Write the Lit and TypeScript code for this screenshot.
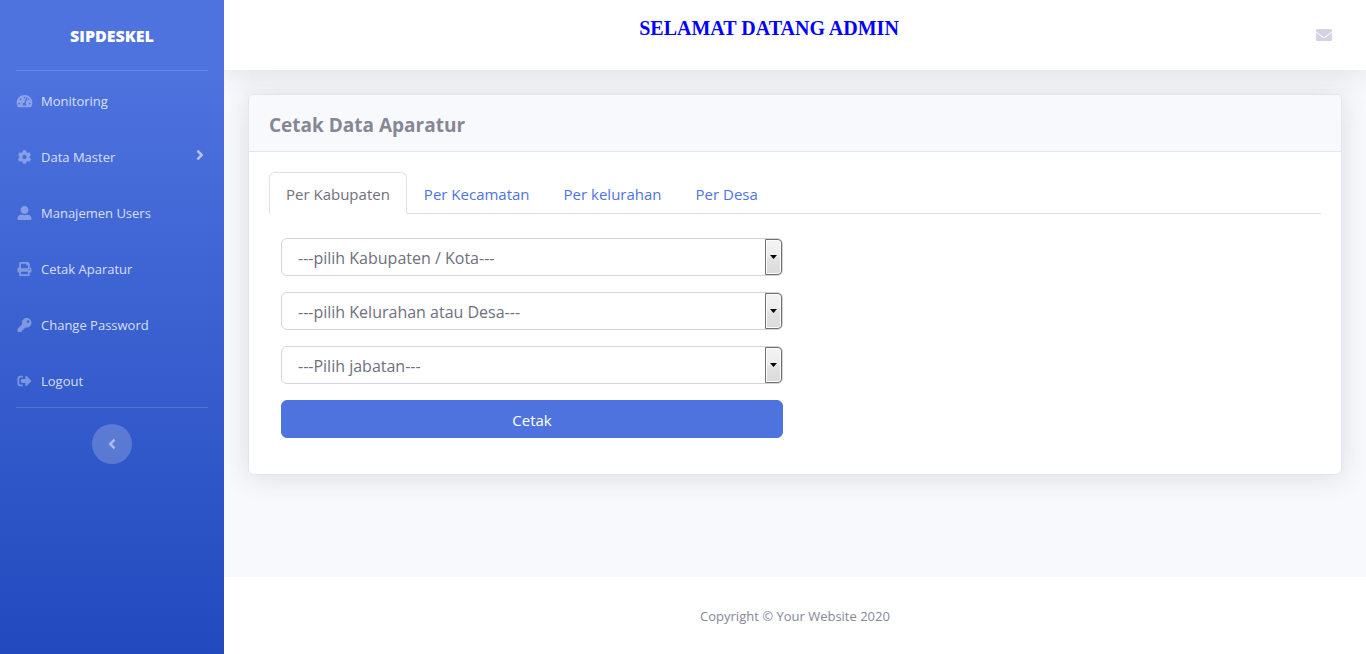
import { LitElement, html, css, svg } from "lit";
import { customElement, state } from "lit/decorators.js";
import { classMap } from "lit/directives/class-map.js";

interface Icon {
  box: string;
  path: string;
}

const icons: Record<string, Icon> = {
  gauge: {
    box: "0 0 576 512",
    path: "M288 32C128.94 32 0 160.94 0 320c0 52.8 14.25 102.26 39.06 144.8 5.61 9.62 16.3 15.2 27.44 15.2h443c11.14 0 21.83-5.58 27.44-15.2C561.75 422.26 576 372.8 576 320c0-159.06-128.94-288-288-288zm0 64c14.71 0 26.58 10.13 30.32 23.65-1.11 2.26-2.64 4.23-3.45 6.67l-9.22 27.67c-5.13 3.49-10.97 6.01-17.64 6.01-17.67 0-32-14.33-32-32S270.33 96 288 96zM96 384c-17.67 0-32-14.33-32-32s14.33-32 32-32 32 14.33 32 32-14.33 32-32 32zm48-160c-17.67 0-32-14.33-32-32s14.33-32 32-32 32 14.33 32 32-14.33 32-32 32zm246.77-72.41l-61.33 184C343.13 347.33 352 364.54 352 384c0 11.72-3.38 22.55-8.88 32H232.88c-5.5-9.45-8.88-20.28-8.88-32 0-33.94 26.5-61.43 59.9-63.59l61.34-184.01c4.17-12.56 17.73-19.45 30.36-15.17 12.57 4.19 19.35 17.79 15.17 30.36zm14.66 57.2l15.52-46.55c3.47-1.29 7.13-2.23 11.05-2.23 17.67 0 32 14.33 32 32s-14.33 32-32 32c-11.38-.01-20.89-6.28-26.57-15.22zM480 384c-17.67 0-32-14.33-32-32s14.33-32 32-32 32 14.33 32 32-14.33 32-32 32z",
  },
  cog: {
    box: "0 0 512 512",
    path: "M487.4 315.7l-42.6-24.6c4.3-23.2 4.3-47 0-70.2l42.6-24.6c4.9-2.8 7.1-8.6 5.5-14-11.1-35.6-30-67.8-54.7-94.6-3.8-4.1-10-5.1-14.8-2.3L380.8 110c-17.9-15.4-38.5-27.3-60.8-35.1V25.8c0-5.6-3.9-10.5-9.4-11.7-36.7-8.2-74.3-7.8-109.2 0-5.5 1.2-9.4 6.1-9.4 11.7V75c-22.2 7.9-42.8 19.8-60.8 35.1L88.7 85.5c-4.9-2.8-11-1.9-14.8 2.3-24.7 26.7-43.6 58.9-54.7 94.6-1.7 5.4.6 11.2 5.5 14L67.3 221c-4.3 23.2-4.3 47 0 70.2l-42.6 24.6c-4.9 2.8-7.1 8.6-5.5 14 11.1 35.6 30 67.8 54.7 94.6 3.8 4.1 10 5.1 14.8 2.3l42.6-24.6c17.9 15.4 38.5 27.3 60.8 35.1v49.2c0 5.6 3.9 10.5 9.4 11.7 36.7 8.2 74.3 7.8 109.2 0 5.5-1.2 9.4-6.1 9.4-11.7v-49.2c22.2-7.9 42.8-19.8 60.8-35.1l42.6 24.6c4.9 2.8 11 1.9 14.8-2.3 24.7-26.7 43.6-58.9 54.7-94.6 1.5-5.5-.7-11.3-5.6-14.1zM256 336c-44.1 0-80-35.9-80-80s35.9-80 80-80 80 35.9 80 80-35.9 80-80 80z",
  },
  user: {
    box: "0 0 512 512",
    path: "M256 288c79.5 0 144-64.5 144-144S335.5 0 256 0 112 64.5 112 144s64.5 144 144 144zm128 32h-55.1c-22.2 10.2-46.9 16-72.9 16s-50.6-5.8-72.9-16H128C57.3 320 0 377.3 0 448v16c0 26.5 21.5 48 48 48h416c26.5 0 48-21.5 48-48v-16c0-70.7-57.3-128-128-128z",
  },
  print: {
    box: "0 0 512 512",
    path: "M448 192V77.25c0-8.49-3.37-16.62-9.37-22.63L393.37 9.37c-6-6-14.14-9.37-22.63-9.37H96C78.33 0 64 14.33 64 32v160c-35.35 0-64 28.65-64 64v112c0 8.84 7.16 16 16 16h48v96c0 17.67 14.33 32 32 32h320c17.67 0 32-14.33 32-32v-96h48c8.84 0 16-7.16 16-16V256c0-35.35-28.65-64-64-64zm-64 256H128v-96h256v96zm0-224H128V64h192v48c0 8.84 7.16 16 16 16h48v96zm48 72c-13.25 0-24-10.75-24-24 0-13.26 10.75-24 24-24s24 10.74 24 24c0 13.25-10.75 24-24 24z",
  },
  key: {
    box: "0 0 512 512",
    path: "M512 176.001C512 273.203 433.202 352 336 352c-11.22 0-22.19-1.062-32.827-3.069l-24.012 27.014A23.999 23.999 0 0 1 261.223 384H224v40c0 13.255-10.745 24-24 24h-40v40c0 13.255-10.745 24-24 24H24c-13.255 0-24-10.745-24-24v-78.059c0-6.365 2.529-12.47 7.029-16.971l161.802-161.802C163.108 213.814 160 195.271 160 176 160 78.798 238.797.001 335.999 0 433.488-.001 512 78.511 512 176.001zM336 128c0 26.51 21.49 48 48 48s48-21.49 48-48-21.49-48-48-48-48 21.49-48 48z",
  },
  logout: {
    box: "0 0 512 512",
    path: "M497 273L329 441c-15 15-41 4.5-41-17v-96H152c-13.3 0-24-10.7-24-24v-96c0-13.3 10.7-24 24-24h136V88c0-21.4 25.9-32 41-17l168 168c9.3 9.4 9.3 24.6 0 34zM192 436v-40c0-6.6-5.4-12-12-12H96c-17.7 0-32-14.3-32-32V160c0-17.7 14.3-32 32-32h84c6.6 0 12-5.4 12-12V76c0-6.6-5.4-12-12-12H96c-53 0-96 43-96 96v192c0 53 43 96 96 96h84c6.6 0 12-5.4 12-12z",
  },
  envelope: {
    box: "0 0 512 512",
    path: "M502.3 190.8c3.9-3.1 9.7-.2 9.7 4.7V400c0 26.5-21.5 48-48 48H48c-26.5 0-48-21.5-48-48V195.6c0-5 5.7-7.8 9.7-4.7 22.4 17.4 52.1 39.5 154.1 113.6 21.1 15.4 56.7 47.8 92.2 47.6 35.7.3 72-32.8 92.3-47.6 102-74.1 131.6-96.3 154-113.7zM256 320c23.2.4 56.6-29.2 73.4-41.4 132.7-96.3 142.8-104.7 173.4-128.7 5.8-4.5 9.2-11.5 9.2-18.9v-19c0-26.5-21.5-48-48-48H48c-26.5 0-48 21.5-48 48v19c0 7.4 3.4 14.3 9.2 18.9 30.6 23.9 40.7 32.4 173.4 128.7 16.8 12.2 50.2 41.8 73.4 41.4z",
  },
  right: {
    box: "0 0 256 512",
    path: "M224.3 273l-136 136c-9.4 9.4-24.6 9.4-33.9 0l-22.6-22.6c-9.4-9.4-9.4-24.6 0-33.9l96.4-96.4-96.4-96.4c-9.4-9.4-9.4-24.6 0-33.9L54.3 103c9.4-9.4 24.6-9.4 33.9 0l136 136c9.5 9.4 9.5 24.6.1 34z",
  },
  left: {
    box: "0 0 256 512",
    path: "M31.7 239l136-136c9.4-9.4 24.6-9.4 33.9 0l22.6 22.6c9.4 9.4 9.4 24.6 0 33.9L127.9 256l96.4 96.4c9.4 9.4 9.4 24.6 0 33.9L201.7 409c-9.4 9.4-24.6 9.4-33.9 0l-136-136c-9.5-9.4-9.5-24.6-.1-34z",
  },
};

const icon = (name: string, cls: string) => html`
  <svg class=${cls} viewBox=${icons[name].box} aria-hidden="true">
    ${svg`<path fill="currentColor" d=${icons[name].path}></path>`}
  </svg>
`;

const menu = [
  { icon: "gauge", label: "Monitoring" },
  { icon: "cog", label: "Data Master", expandable: true },
  { icon: "user", label: "Manajemen Users" },
  { icon: "print", label: "Cetak Aparatur" },
  { icon: "key", label: "Change Password" },
  { icon: "logout", label: "Logout" },
];

const tabs = ["Per Kabupaten", "Per Kecamatan", "Per kelurahan", "Per Desa"];

const fields = [
  { id: "kabupaten", label: "Kabupaten / Kota", prompt: "---pilih Kabupaten / Kota---" },
  { id: "kelurahan", label: "Kelurahan atau Desa", prompt: "---pilih Kelurahan atau Desa---" },
  { id: "jabatan", label: "Jabatan", prompt: "---Pilih jabatan---" },
];

@customElement("app-sidebar")
export class AppSidebar extends LitElement {
  static styles = css`
    :host {
      display: block;
      flex: none;
      z-index: 1;
      width: 224px;
      color: #fff;
      background: linear-gradient(180deg, #4e73df 10%, #224abe 100%);
    }
    .brand {
      display: flex;
      align-items: center;
      justify-content: center;
      height: 70px;
      padding-top: 2px;
      box-sizing: border-box;
      color: #fff;
      font-size: 16px;
      font-weight: 800;
      text-decoration: none;
    }
    .rule {
      margin: 0 16px;
      border: 0;
      border-top: 1px solid rgba(255, 255, 255, 0.15);
    }
    .menu {
      display: flex;
      flex-direction: column;
      gap: 4px;
      margin: 0;
      padding: 4px 0 0;
      list-style: none;
    }
    .item {
      display: flex;
      align-items: center;
      gap: 8px;
      padding: 16px;
      color: rgba(255, 255, 255, 0.8);
      font-size: 13px;
      line-height: 20px;
      text-decoration: none;
    }
    .glyph {
      width: 17px;
      height: 14px;
      color: rgba(255, 255, 255, 0.35);
    }
    .label {
      flex: 1;
    }
    .arrow {
      width: 16px;
      height: 16px;
      padding-bottom: 4px;
      color: rgba(255, 255, 255, 0.6);
    }
    .toggle {
      display: flex;
      align-items: center;
      justify-content: center;
      width: 40px;
      height: 40px;
      margin: 16px auto;
      padding: 0;
      border: 0;
      border-radius: 50%;
      color: rgba(255, 255, 255, 0.5);
      background: rgba(255, 255, 255, 0.2);
    }
    .back {
      width: 16px;
      height: 16px;
    }
  `;

  render() {
    return html`
      <a class="brand" href="#">SIPDESKEL</a>
      <hr class="rule" />
      <ul class="menu">
        ${menu.map(
          (m) => html`<li>
            <a class="item" href="#">
              ${icon(m.icon, "glyph")}
              <span class="label">${m.label}</span>
              ${m.expandable ? icon("right", "arrow") : null}
            </a>
          </li>`
        )}
      </ul>
      <hr class="rule" />
      <button class="toggle" type="button" aria-label="Toggle sidebar">${icon("left", "back")}</button>
    `;
  }
}

@customElement("print-card")
export class PrintCard extends LitElement {
  @state() private active = 0;

  static styles = css`
    :host {
      display: block;
      border: 1px solid #e3e6f0;
      border-radius: 6px;
      background: #fff;
      box-shadow: 0 2px 28px rgba(58, 59, 69, 0.15);
    }
    .title {
      margin: 0;
      padding: 18px 20px 14px;
      border-bottom: 1px solid #e3e6f0;
      border-radius: 5px 5px 0 0;
      background: #f8f9fc;
      color: #858796;
      font-size: 19px;
      font-weight: 700;
      line-height: 24px;
    }
    .body {
      padding: 20px;
    }
    .tabs {
      display: flex;
      border-bottom: 1px solid #dddfeb;
    }
    .tab {
      margin-bottom: -1px;
      padding: 9px 16px 7px;
      border: 1px solid transparent;
      border-radius: 6px 6px 0 0;
      background: none;
      color: #4e73df;
      font: inherit;
      line-height: 24px;
    }
    .tab.active {
      border-color: #dddfeb #dddfeb #fff;
      background: #fff;
      color: #6e707e;
    }
    .form {
      display: flex;
      flex-direction: column;
      gap: 16px;
      width: 50%;
      box-sizing: border-box;
      padding: 24px 12px 16px;
    }
    .field {
      display: block;
      position: relative;
    }
    .select {
      display: block;
      width: 100%;
      height: 38px;
      box-sizing: border-box;
      padding: 2px 32px 0 16px;
      border: 1px solid #d1d3e2;
      border-radius: 6px;
      appearance: none;
      background: #fff;
      color: #6e707e;
      font: inherit;
      font-size: 16px;
    }
    .drop {
      display: flex;
      align-items: center;
      justify-content: center;
      position: absolute;
      top: 1px;
      right: 1px;
      bottom: 1px;
      width: 17px;
      box-sizing: border-box;
      border: 1px solid #707070;
      border-radius: 0 4px 4px 0;
      background: linear-gradient(#f3f3f3 0%, #ededed 50%, #e4e4e4 50%, #dadada 100%);
      box-shadow: inset 0 0 0 1px #fcfcfc;
      pointer-events: none;
    }
    .caret {
      width: 7px;
      height: 4px;
    }
    .submit {
      height: 38px;
      padding: 2px 12px 0;
      border: 1px solid #4e73df;
      border-radius: 6px;
      background: #4e73df;
      color: #fff;
      font: inherit;
    }
  `;

  render() {
    return html`
      <h1 class="title">Cetak Data Aparatur</h1>
      <div class="body">
        <div class="tabs" role="tablist">
          ${tabs.map(
            (t, i) => html`<button
              type="button"
              role="tab"
              aria-selected=${i === this.active ? "true" : "false"}
              class=${classMap({ tab: true, active: i === this.active })}
              @click=${() => (this.active = i)}
            >${t}</button>`
          )}
        </div>
        <form class="form" @submit=${(e: Event) => e.preventDefault()}>
          ${fields.map(
            (f) => html`<label class="field" for=${f.id}>
              <select class="select" id=${f.id} aria-label=${f.label}>
                <option>${f.prompt}</option>
              </select>
              <span class="drop">
                <svg class="caret" viewBox="0 0 7 4" aria-hidden="true"><path d="M0 0h7L3.500 4z"></path></svg>
              </span>
            </label>`
          )}
          <button class="submit" type="submit">Cetak</button>
        </form>
      </div>
    `;
  }
}

@customElement("app-root")
export class AppRoot extends LitElement {
  static styles = css`
    :host {
      display: flex;
      min-height: 100vh;
      background: #f8f9fc;
      color: #858796;
      font-family: "Segoe UI", "Open Sans", "Noto Sans", sans-serif;
      font-size: 15px;
      line-height: 24px;
    }
    .page {
      display: flex;
      flex: 1;
      flex-direction: column;
      min-width: 0;
    }
    .topbar {
      display: flex;
      height: 70px;
      padding: 0 16px;
      box-sizing: border-box;
      background: #fff;
      box-shadow: 0 2px 28px rgba(58, 59, 69, 0.15);
    }
    .welcome {
      flex: 1;
      margin: 0;
      padding-top: 16px;
      color: #0000ff;
      font-family: "Liberation Serif", "Times New Roman", serif;
      font-size: 20px;
      font-weight: 700;
      line-height: 24px;
      text-align: center;
    }
    .mail {
      display: flex;
      align-items: center;
      padding: 0 18px;
      color: #d1d3e2;
    }
    .envelope {
      width: 16px;
      height: 16px;
    }
    .content {
      flex: 1;
      padding: 24px;
    }
    .footer {
      padding: 33px 24px 31px;
      background: #fff;
      font-size: 13px;
      line-height: 13px;
      text-align: center;
    }
  `;

  render() {
    return html`
      <app-sidebar></app-sidebar>
      <div class="page">
        <header class="topbar">
          <p class="welcome">SELAMAT DATANG ADMIN</p>
          <a class="mail" href="#" aria-label="Messages">${icon("envelope", "envelope")}</a>
        </header>
        <main class="content"><print-card></print-card></main>
        <footer class="footer">Copyright © Your Website 2020</footer>
      </div>
    `;
  }
}
